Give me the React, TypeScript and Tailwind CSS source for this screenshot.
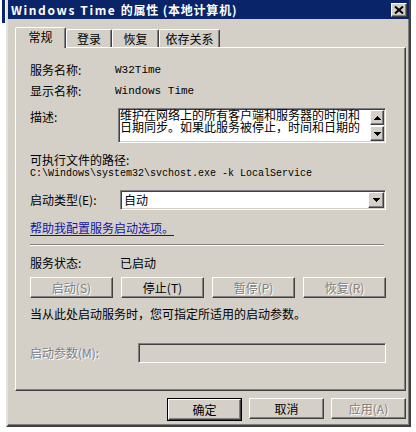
import React from "react";

const raised =
	"border border-t-white border-l-white border-r-[#404040] border-b-[#404040] shadow-[inset_-1px_-1px_0_#808080]";
const sunken =
	"border border-t-[#808080] border-l-[#808080] border-r-white border-b-white shadow-[inset_1px_1px_0_#404040,inset_-1px_-1px_0_#D4D0C8]";
const disabledText = "text-[#808080] [text-shadow:1px_1px_0_#ffffff]";

const Arrow = ({ up = false }: { up?: boolean }) => (
	<svg width="7" height="4" viewBox="0 0 7 4" className={up ? "rotate-180" : ""}>
		<path d="M0 0h7L3.5 4z" fill="#000" shapeRendering="crispEdges" />
	</svg>
);

const Tab = ({ label, width, active = false }: { label: string; width: string; active?: boolean }) => (
	<div
		className={`${width} flex items-center justify-center rounded-t-[2px] border-t border-l border-r border-t-white border-l-white border-r-[#404040] bg-[#D4D0C8] shadow-[inset_-1px_0_0_#808080] ${
			active ? "relative z-10 -mb-px h-[21px] pb-[2px]" : "h-[18px]"
		}`}
	>
		{label}
	</div>
);

const Btn = ({ label, disabled = false, width = "w-[83px]" }: { label: string; disabled?: boolean; width?: string }) => (
	<div className={`${width} h-[21px] flex items-center justify-center ${raised} ${disabled ? disabledText : "text-black"}`}>
		{label}
	</div>
);

export default function App() {
	return (
		<div className="flex h-[432px] w-[416px] overflow-hidden bg-white font-['Noto_Sans_CJK_SC','Liberation_Sans',sans-serif] text-[12px] leading-[16px] text-black">
			<div className="w-[6px] pl-[2px]">
				<div className="h-[23px] w-[3px] bg-[#0A246A]" />
			</div>
			<div className="flex h-[427px] w-[405px] flex-col border-l-2 border-r-2 border-b-2 border-l-[#E4E2DC] border-r-[#404040] border-b-[#404040] bg-[#D4D0C8] shadow-[inset_-1px_-1px_0_#808080]">
				{/* title bar */}
				<div className="flex h-[19px] items-center justify-between bg-[#0A246A] pl-[3px] pr-[2px]">
					<span className="text-[12px] font-bold tracking-[0.8px] text-white">
						<span className="tracking-[1.6px]">Windows Time </span>的属性 (本地计算机)
					</span>
					<div className={`flex h-[14px] w-[16px] items-center justify-center bg-[#D4D0C8] ${raised}`}>
						<svg width="10" height="8" viewBox="0 0 10 8">
							<path d="M1 0.5l8 7M9 0.5l-8 7" stroke="#000" strokeWidth="2" />
						</svg>
					</div>
				</div>

				<div className="flex flex-col pl-[7px] pt-[8px]">
					{/* tabs */}
					<div className="flex h-[20px] items-end">
						<Tab label="常规" width="w-[51px]" active />
						<Tab label="登录" width="w-[46px]" />
						<Tab label="恢复" width="w-[47px]" />
						<Tab label="依存关系" width="w-[61px]" />
					</div>

					{/* panel */}
					<div className="flex h-[344px] w-[391px] flex-col border border-t-white border-l-white border-r-[#404040] border-b-[#404040] pl-[14px] shadow-[inset_-1px_-1px_0_#808080]">
						<div className="mt-[14px] flex h-[16px] items-center">
							<span className="w-[85px]">服务名称:</span>
							<span className="font-['Liberation_Mono',monospace] text-[11px]">W32Time</span>
						</div>
						<div className="mt-[5px] flex h-[16px] items-center">
							<span className="w-[85px]">显示名称:</span>
							<span className="font-['Liberation_Mono',monospace] text-[11px]">Windows Time</span>
						</div>
						<div className="mt-[9px] flex h-[35px] items-start">
							<span className="w-[88px] pt-px">描述:</span>
							<div className={`flex h-[35px] w-[268px] bg-white ${sunken}`}>
								<div className="flex-1 pl-[1px] leading-[12px]">
									<div>维护在网络上的所有客户端和服务器的时间和</div>
									<div>日期同步。如果此服务被停止，时间和日期的</div>
								</div>
								<div className="flex w-[15px] flex-col gap-px pt-px pr-px">
									<div className={`flex h-[15px] items-center justify-center bg-[#D4D0C8] ${raised}`}>
										<Arrow up />
									</div>
									<div className={`flex h-[15px] items-center justify-center bg-[#D4D0C8] ${raised}`}>
										<Arrow />
									</div>
								</div>
							</div>
						</div>
						<div className="mt-[10px] flex h-[14px] items-center">可执行文件的路径:</div>
						<div className="flex h-[14px] items-center font-['Liberation_Mono',monospace] text-[10px]">
							C:\Windows\system32\svchost.exe -k LocalService
						</div>
						<div className="mt-[9px] flex h-[20px] items-center">
							<span className="w-[90px]">启动类型(E):</span>
							<div className={`flex h-[20px] w-[266px] items-center bg-white pl-[3px] ${sunken}`}>
								<span className="flex-1">自动</span>
								<div className={`mr-px flex h-[16px] w-[16px] items-center justify-center bg-[#D4D0C8] ${raised}`}>
									<Arrow />
								</div>
							</div>
						</div>
						<div className="mt-[10px] flex h-[16px] items-center">
							<span className="text-[#1515A5] underline underline-offset-2">帮助我配置服务启动选项。</span>
						</div>
						<div className="mt-[8px] h-[2px] w-[354px] border-t border-b border-t-[#808080] border-b-white" />
						<div className="mt-[9px] flex h-[16px] items-center">
							<span className="w-[90px]">服务状态:</span>
							<span>已启动</span>
						</div>
						<div className="mt-[6px] flex gap-[8px]">
							<Btn label="启动(S)" disabled />
							<Btn label="停止(T)" />
							<Btn label="暂停(P)" disabled />
							<Btn label="恢复(R)" disabled />
						</div>
						<div className="mt-[8px] flex h-[16px] items-center">当从此处启动服务时，您可指定所适用的启动参数。</div>
						<div className="mt-[21px] flex h-[20px] items-center">
							<span className={`w-[108px] ${disabledText}`}>启动参数(M):</span>
							<div className={`h-[20px] w-[248px] bg-[#D4D0C8] ${sunken}`} />
						</div>
					</div>

					{/* dialog buttons */}
					<div className="mt-[7px] flex w-[391px] justify-end gap-[7px]">
						<div className="border border-black">
							<Btn label="确定" width="w-[73px]" />
						</div>
						<Btn label="取消" width="w-[75px]" />
						<Btn label="应用(A)" width="w-[75px]" disabled />
					</div>
				</div>
			</div>
		</div>
	);
}
